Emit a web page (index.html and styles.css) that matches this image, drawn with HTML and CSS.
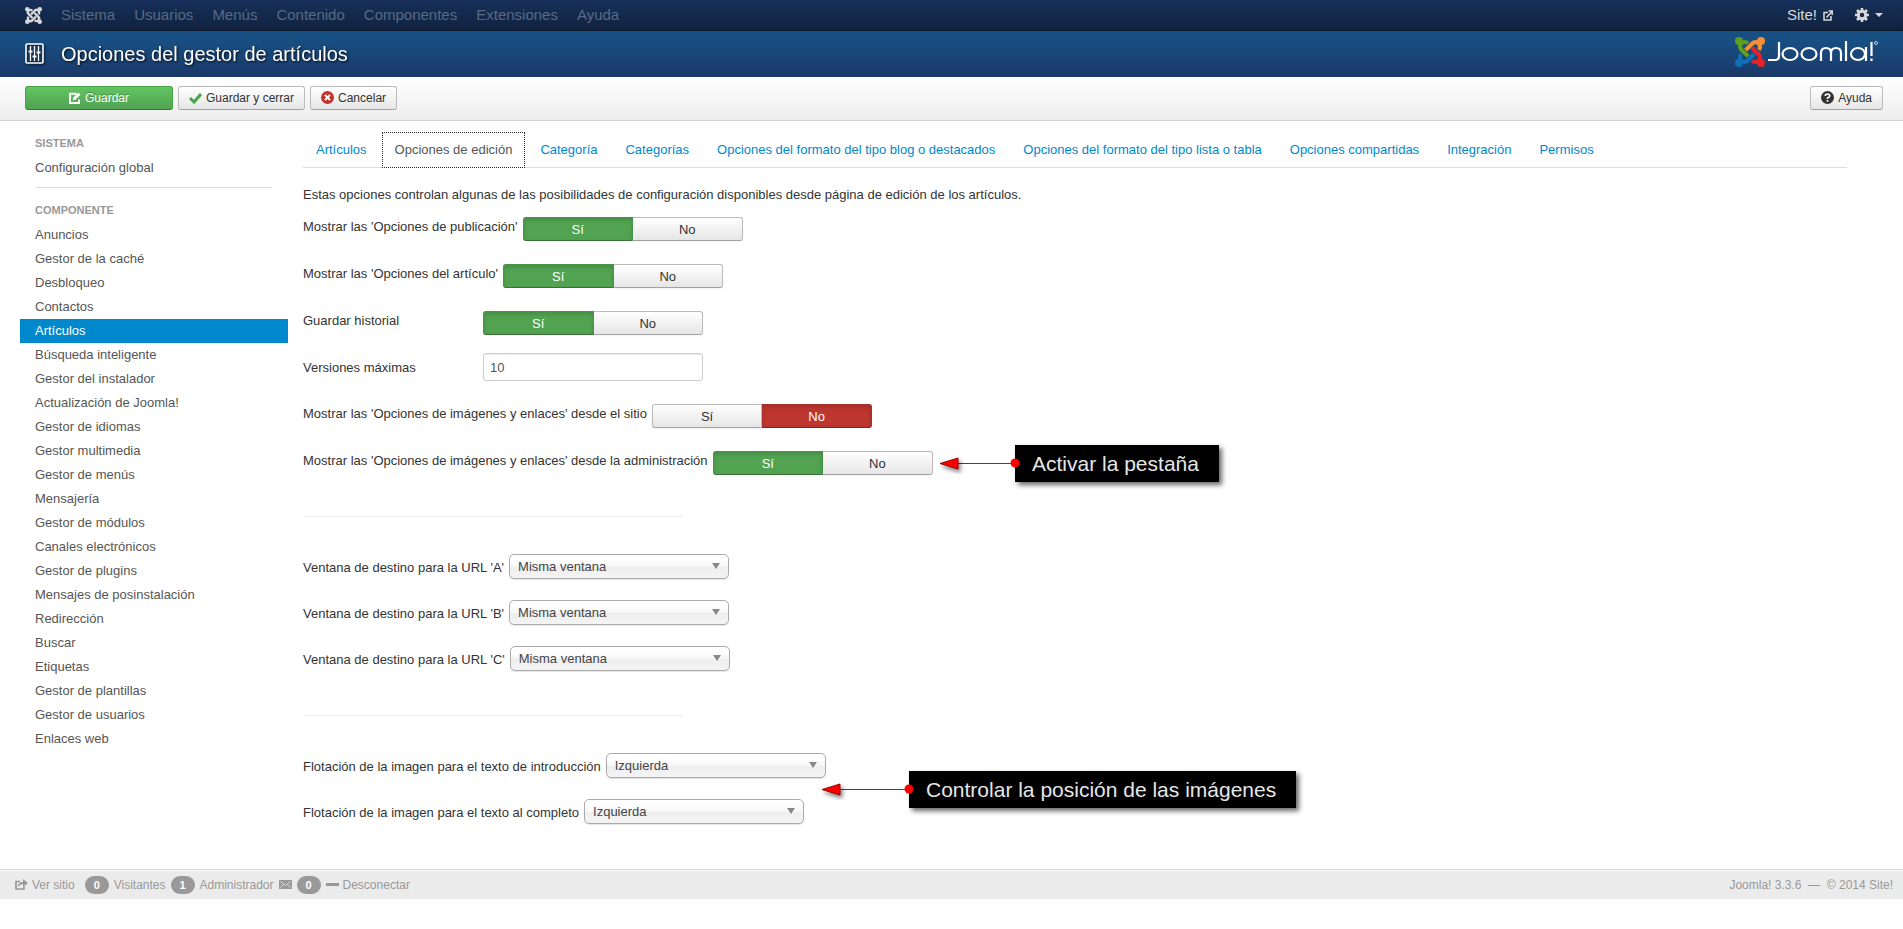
FILE: index.html
```html
<!DOCTYPE html>
<html lang="es">
<head>
<meta charset="utf-8">
<title>Opciones del gestor de artículos</title>
<link rel="stylesheet" href="styles.css">
</head>
<body>
<svg class="sprite" aria-hidden="true">
  <symbol id="arm" viewBox="0 0 24 24">
    <path d="M5.050 13.750A3.600 3.600 0 0 0 10.150 18.850L15.500 13.500" fill="none" stroke="currentColor" stroke-width="3.350"/>
    <circle cx="3.200" cy="20.800" r="3.200" fill="currentColor"/>
  </symbol>
</svg>
<nav class="topbar">
  <a class="topbar-brand" href="#" aria-label="Joomla">
    <svg width="17" height="17" viewBox="0 0 24 24">
      <use href="#arm"/><use href="#arm" transform="rotate(-90 12 12)"/><use href="#arm" transform="rotate(180 12 12)"/><use href="#arm" transform="rotate(90 12 12)"/>
    </svg>
  </a>
  <ul class="topbar-menu">
    <li><a href="#">Sistema</a></li><li><a href="#">Usuarios</a></li><li><a href="#">Menús</a></li><li><a href="#">Contenido</a></li><li><a href="#">Componentes</a></li><li><a href="#">Extensiones</a></li><li><a href="#">Ayuda</a></li>
  </ul>
  <div class="topbar-right">
    <a class="topbar-site" href="#">Site!
      <svg width="10" height="11" viewBox="0 0 10 11" fill="none" stroke="#d9d9d9" stroke-width="1.500"><path d="M5 2.500H1V10h7V6M3.500 7.500 9 1.500M5.500 1H9.200V5"/></svg>
    </a>
    <a class="topbar-user" href="#" aria-label="Usuario">
      <svg width="14" height="14" viewBox="0 0 14 14"><g fill="none" stroke="#d9d9d9"><circle cx="7" cy="7" r="3.700" stroke-width="3"/><path d="M7 0v3M7 11v3M0 7h3M11 7h3M2 2l2 2M10 10l2 2M12 2l-2 2M4 10l-2 2" stroke-width="2.600"/></g></svg>
      <span class="caret"></span>
    </a>
  </div>
</nav>
<header class="header">
  <svg class="header-icon" width="20" height="22" viewBox="0 0 20 22" fill="none" stroke="#fff"><rect x="1" y="1" width="17" height="19" rx="1" stroke-width="1.600"/><path d="M5.500 3v15M9.500 3v15M13.500 3v15" stroke-width="1.300"/><path d="M3.500 8.500h4M7.500 13.500h4M11.500 9.500h4" stroke-width="2"/></svg>
  <h1>Opciones del gestor de artículos</h1>
  <div class="logo">
    <svg class="logo-mark" width="30" height="30" viewBox="0 0 24 24">
      <use href="#arm" color="#0f70b7"/><use href="#arm" color="#e52228" transform="rotate(-90 12 12)"/><use href="#arm" color="#f9902f" transform="rotate(180 12 12)"/><use href="#arm" color="#5ba01f" transform="rotate(90 12 12)"/>
    </svg>
    <svg class="wordmark" role="img" aria-label="Joomla!" width="110" height="24" viewBox="0 0 110 24" fill="none" stroke="#fff" stroke-width="2.200"><path d="M11 2V16Q11 20 7 20H0"/><ellipse cx="22" cy="14" rx="7.500" ry="6"/><ellipse cx="41" cy="14" rx="7.500" ry="6"/><path d="M53 21V13Q53 8 58 8Q63 8 63 13V21M63 13Q63 8 68 8Q73 8 73 13V21M78 1V21"/><ellipse cx="90" cy="14" rx="7" ry="6"/><path d="M98 7V21M103.500 2V16M103.500 18.500V21"/><circle cx="108" cy="3" r="1.500" stroke-width=".7"/></svg>
  </div>
</header>
<div class="toolbar">
  <button class="btn btn-save" type="button"><svg width="12" height="12" viewBox="0 0 12 12" fill="none"><path d="M7.500 1.800H1V11h9V7.500" stroke="#fff" stroke-width="1.900"/><path d="M3.500 8.500l1-3L9.300.600l2.200 2.200-4.900 4.800z" fill="#fff"/></svg>Guardar</button>
  <button class="btn" type="button"><svg width="13" height="12" viewBox="0 0 13 12"><path d="M1 6l4 4 7-8" fill="none" stroke="#46a546" stroke-width="3"/></svg>Guardar y cerrar</button>
  <button class="btn" type="button"><svg width="13" height="13" viewBox="0 0 13 13"><circle cx="6.500" cy="6.500" r="6.500" fill="#bd362f"/><path d="M4 4l5 5M9 4l-5 5" stroke="#fff" stroke-width="1.800"/></svg>Cancelar</button>
  <button class="btn btn-help" type="button"><svg width="13" height="13" viewBox="0 0 13 13"><circle cx="6.500" cy="6.500" r="6.500" fill="#333"/><path d="M4.300 5Q4.300 3 6.500 3T8.700 5Q8.700 6 6.500 7V8M6.500 9v1.800" fill="none" stroke="#fff" stroke-width="1.700"/></svg>Ayuda</button>
</div>
<div class="layout">
  <aside class="sidebar">
    <h2>Sistema</h2>
    <ul><li><a href="#">Configuración global</a></li></ul>
    <hr>
    <h2>Componente</h2>
    <ul>
      <li><a href="#">Anuncios</a></li><li><a href="#">Gestor de la caché</a></li><li><a href="#">Desbloqueo</a></li><li><a href="#">Contactos</a></li><li><a class="active" href="#">Artículos</a></li><li><a href="#">Búsqueda inteligente</a></li><li><a href="#">Gestor del instalador</a></li><li><a href="#">Actualización de Joomla!</a></li><li><a href="#">Gestor de idiomas</a></li><li><a href="#">Gestor multimedia</a></li><li><a href="#">Gestor de menús</a></li><li><a href="#">Mensajería</a></li><li><a href="#">Gestor de módulos</a></li><li><a href="#">Canales electrónicos</a></li><li><a href="#">Gestor de plugins</a></li><li><a href="#">Mensajes de posinstalación</a></li><li><a href="#">Redirección</a></li><li><a href="#">Buscar</a></li><li><a href="#">Etiquetas</a></li><li><a href="#">Gestor de plantillas</a></li><li><a href="#">Gestor de usuarios</a></li><li><a href="#">Enlaces web</a></li>
    </ul>
  </aside>
  <main class="content">
    <ul class="tabs">
      <li><a href="#">Artículos</a></li><li><a class="active" href="#">Opciones de edición</a></li><li><a href="#">Categoría</a></li><li><a href="#">Categorías</a></li><li><a href="#">Opciones del formato del tipo blog o destacados</a></li><li><a href="#">Opciones del formato del tipo lista o tabla</a></li><li><a href="#">Opciones compartidas</a></li><li><a href="#">Integración</a></li><li><a href="#">Permisos</a></li>
    </ul>
    <p class="intro">Estas opciones controlan algunas de las posibilidades de configuración disponibles desde página de edición de los artículos.</p>
    <form class="form">
      <div class="row" role="radiogroup" aria-labelledby="l1"><span class="label" id="l1">Mostrar las 'Opciones de publicación'</span><div class="switch"><label><input type="radio" name="f1" checked>Sí</label><label class="no"><input type="radio" name="f1">No</label></div></div>
      <div class="row" role="radiogroup" aria-labelledby="l2"><span class="label" id="l2">Mostrar las 'Opciones del artículo'</span><div class="switch"><label><input type="radio" name="f2" checked>Sí</label><label class="no"><input type="radio" name="f2">No</label></div></div>
      <div class="row" role="radiogroup" aria-labelledby="l3"><span class="label" id="l3">Guardar historial</span><div class="switch"><label><input type="radio" name="f3" checked>Sí</label><label class="no"><input type="radio" name="f3">No</label></div></div>
      <div class="row row-text"><label class="label" for="max">Versiones máximas</label><input class="text" id="max" type="text" value="10"></div>
      <div class="row" role="radiogroup" aria-labelledby="l5"><span class="label" id="l5">Mostrar las 'Opciones de imágenes y enlaces' desde el sitio</span><div class="switch"><label><input type="radio" name="f5">Sí</label><label class="no"><input type="radio" name="f5" checked>No</label></div></div>
      <div class="row" role="radiogroup" aria-labelledby="l6"><span class="label" id="l6">Mostrar las 'Opciones de imágenes y enlaces' desde la administración</span><div class="switch"><label><input type="radio" name="f6" checked>Sí</label><label class="no"><input type="radio" name="f6">No</label></div></div>
      <hr>
      <div class="row row-select"><label class="label" for="ua">Ventana de destino para la URL 'A'</label><span class="select"><select id="ua"><option>Misma ventana</option></select></span></div>
      <div class="row row-select"><label class="label" for="ub">Ventana de destino para la URL 'B'</label><span class="select"><select id="ub"><option>Misma ventana</option></select></span></div>
      <div class="row row-select"><label class="label" for="uc">Ventana de destino para la URL 'C'</label><span class="select"><select id="uc"><option>Misma ventana</option></select></span></div>
      <hr>
      <div class="row row-select"><label class="label" for="fi">Flotación de la imagen para el texto de introducción</label><span class="select"><select id="fi"><option>Izquierda</option></select></span></div>
      <div class="row row-select"><label class="label" for="fc">Flotación de la imagen para el texto al completo</label><span class="select"><select id="fc"><option>Izquierda</option></select></span></div>
      <div class="callout callout-tab">
        <svg class="arrow" width="84" height="20" viewBox="0 0 84 20"><path d="M18 9.500H76" stroke="#e00000"/><path class="head" d="M1 9.500 19 4V15z" fill="#f00" stroke="#900"/><circle cx="76" cy="9" r="4.500" fill="#f00"/></svg>
        <span>Activar la pestaña</span>
      </div>
      <div class="callout callout-position">
        <svg class="arrow" width="96" height="20" viewBox="0 0 96 20"><path d="M18 9.500H88" stroke="#e00000"/><path class="head" d="M1 9.500 19 4V15z" fill="#f00" stroke="#900"/><circle cx="88" cy="9" r="4.500" fill="#f00"/></svg>
        <span>Controlar la posición de las imágenes</span>
      </div>
    </form>
  </main>
</div>
<footer class="status">
  <a class="status-site" href="#"><svg width="13" height="11" viewBox="0 0 13 11"><path d="M5 2.500H1V10h8V7.500" fill="none" stroke="#999" stroke-width="1.700"/><path d="M3 8Q3 3 8 3V0l5 4-5 4V5Q5 5 3 8z" fill="#999"/></svg>Ver sitio</a>
  <span class="badge">0</span><span>Visitantes</span>
  <span class="badge">1</span><span>Administrador</span>
  <svg width="13" height="9" viewBox="0 0 13 9"><path fill="#999" d="M0 0h13v9H0z"/><path d="M1.500 1.500l5 4 5-4M1.500 7.500l3-3M11.500 7.500l-3-3" fill="none" stroke="#ebebeb" stroke-width=".8"/></svg>
  <span class="badge">0</span>
  <a class="status-out" href="#"><span class="dash"></span>Desconectar</a>
  <span class="copyright">Joomla! 3.3.6 &nbsp;—&nbsp; © 2014 Site!</span>
</footer>
</body>
</html>
```
FILE: styles.css
```css
* { box-sizing: border-box; }
body { margin: 0; background: #fff; color: #333; font: 13px/18px "Liberation Sans", Arial, sans-serif; }
ul { list-style: none; margin: 0; padding: 0; }
a { color: inherit; text-decoration: none; }
.sprite { display: none; }

.topbar { display: flex; align-items: center; height: 31px; padding: 0 20px 0 25px; background: linear-gradient(#17305b, #10223e); border-bottom: 1px solid #0b182b; font-size: 15px; line-height: 20px; }
.topbar-brand { display: flex; width: 36px; color: #d9d9d9; }
.topbar-menu { display: flex; gap: 19px; color: #596984; }
.topbar-right { display: flex; align-items: center; gap: 22px; margin-left: auto; color: #d9d9d9; }
.topbar-site { display: flex; align-items: center; gap: 6px; }
.topbar-user { display: flex; align-items: center; gap: 6px; }
.caret { border: 4px solid transparent; border-top-color: #d9d9d9; border-bottom: 0; }

.header { display: flex; align-items: center; height: 46px; padding: 0 25px; background: linear-gradient(#184f83 20%, #1a3867); color: #fff; }
.header-icon, .header h1 { filter: drop-shadow(1px 1px 1px rgba(0, 0, 0, .8)); }
.header-icon { width: 20px; margin-right: 16px; }
.header h1 { margin: 0; font-size: 20px; font-weight: normal; line-height: 30px; }
.logo { display: flex; align-items: center; gap: 3px; margin-left: auto; padding-bottom: 4px; }

.toolbar { display: flex; align-items: center; gap: 5px; height: 44px; padding: 0 20px 2px 25px; background: linear-gradient(#fff, #ededed); border-bottom: 1px solid #d3d3d3; }
.btn { display: flex; align-items: center; justify-content: center; gap: 4px; height: 24px; padding: 0 10px; border: 1px solid #bbb; border-bottom-color: #a2a2a2; border-radius: 3px; background: linear-gradient(#fff, #e6e6e6); color: #333; font: 12px/18px "Liberation Sans", Arial, sans-serif; }
.btn-save { width: 148px; border-color: #46a546 #46a546 #387038; background: linear-gradient(#62c462, #51a351); color: #fff; text-shadow: 0 -1px 0 rgba(0, 0, 0, .25); }
.btn-help { margin-left: auto; }

.layout { display: grid; grid-template-columns: 268px minmax(0, 1fr); gap: 15px; padding: 11px 56px 0 20px; }
.sidebar { padding-top: 1px; color: #555; }
.sidebar h2 { margin: 0; padding: 0 15px; color: #999; font-size: 11px; line-height: 20px; text-transform: uppercase; }
.sidebar ul { padding-top: 3px; }
.sidebar a { display: block; padding: 3px 15px; }
.sidebar .active { background: #08c; color: #fff; }
.sidebar hr { height: 1px; margin: 7px 16px 12px; border: 0; background: #e0e0e0; }

.tabs { display: flex; gap: 2px; border-bottom: 1px solid #ddd; }
.tabs a { display: block; margin-bottom: -1px; padding: 8px 12px; border: 1px solid transparent; color: #08c; }
.tabs .active { border: 1px dotted #222; background: #fff; color: #555; }
.intro { margin: 18px 0 13px; }
.form { position: relative; }
.form hr { width: 380px; height: 1px; margin: 41px 0 37px; border: 0; background: #eee; }
.form .row-select + hr { margin-top: 44px; }
.row { display: flex; align-items: flex-start; height: 24px; margin-bottom: 23px; }
.label { min-width: 180px; padding: 1px 5px 0 0; white-space: nowrap; }
.row-text { height: 28px; margin: -5px 0 23px; align-items: center; }
.switch { display: flex; width: 220px; height: 24px; }
.switch label { position: relative; flex: 1; border: 1px solid #bbb; border-bottom-color: #a2a2a2; border-radius: 3px 0 0 3px; background: linear-gradient(#fff, #e6e6e6); line-height: 24px; text-align: center; box-shadow: 0 1px 2px rgba(0, 0, 0, .05); }
.switch .no { border-left: 0; border-radius: 0 3px 3px 0; }
.switch input { position: absolute; inset: 0; margin: 0; opacity: 0; }
.switch label:has(:checked) { border-color: #499349 #499349 #387038; background: #51a351; color: #fff; box-shadow: inset 0 2px 4px rgba(0, 0, 0, .15); }
.switch .no:has(:checked) { border-color: #a9302a #a9302a #802420; background: #bd362f; }
.text { width: 220px; height: 28px; padding: 4px 6px; border: 1px solid #ccc; border-radius: 3px; color: #555; font: inherit; box-shadow: inset 0 1px 1px rgba(0, 0, 0, .075); }
.row-select { align-items: center; height: 25px; margin-bottom: 21px; }
.row-select .label { padding-top: 3px; }
.select { position: relative; }
.select::after { content: ""; position: absolute; top: 9px; right: 9px; border: 4px solid transparent; border-top: 6px solid #888; border-bottom: 0; pointer-events: none; }
.select select { display: block; width: 220px; height: 25px; padding: 0 8px; border: 1px solid #aaa; border-radius: 5px; appearance: none; background: linear-gradient(#fff 20%, #f6f6f6 50%, #eee 52%, #f4f4f4); color: #444; font: inherit; box-shadow: 0 1px 1px rgba(0, 0, 0, .1); }

.callout { position: absolute; padding: 0 20px 0 17px; background: #000; color: #e6e6e6; font-size: 21px; line-height: 37px; white-space: nowrap; box-shadow: 3px 3px 5px rgba(0, 0, 0, .6); }
.callout-tab { top: 228px; left: 712px; }
.callout-position { top: 554px; left: 606px; }
.arrow { position: absolute; top: 9px; right: 100%; margin-right: -8px; }
.head { filter: drop-shadow(2px 3px 2px rgba(0, 0, 0, .5)); }

.status { display: flex; align-items: center; gap: 5px; height: 30px; margin-top: 24px; padding: 0 10px 0 15px; border-top: 1px solid #d4d4d4; background: #ebebeb; box-shadow: inset 0 1px 0 #fafafa; color: #999; font-size: 12px; }
.status a { display: flex; align-items: center; gap: 4px; }
.status-site { margin-right: 5px; }
.badge { width: 24px; border-radius: 9px; background: #999; color: #fff; font-size: 11px; font-weight: bold; text-align: center; }
.dash { width: 13px; height: 3px; background: #999; }
.copyright { margin-left: auto; }
```
